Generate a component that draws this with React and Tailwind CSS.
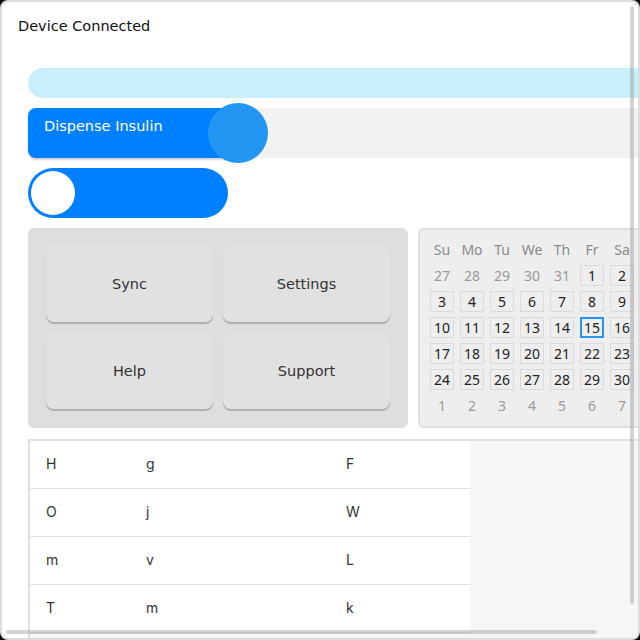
import React from "react";

const days = [];
[27, 28, 29, 30, 31].forEach((d) => days.push({ d, o: true }));
for (let i = 1; i <= 30; i++) days.push({ d: i, o: false });
for (let i = 1; i <= 7; i++) days.push({ d: i, o: true });

const rows = [
  ["H", "g", "F"],
  ["O", "j", "W"],
  ["m", "v", "L"],
  ["T", "m", "k"],
];

const mont = { fontFamily: '"DejaVu Sans", "Noto Sans", sans-serif' };
const cal = { fontFamily: '"Noto Sans", "Open Sans", sans-serif' };

export default function App() {
  return (
    <div className="w-[640px] h-[640px] bg-black">
      <div className="relative w-[640px] h-[640px] rounded-[8px] border-2 border-[#dddddd] bg-white overflow-hidden">
        <div className="w-[720px] flex flex-col">
          <div
            className="h-[66px] pl-[16px] pt-[15px] text-[14.5px] leading-[18px] text-[#111]"
            style={{ fontFamily: '"DejaVu Sans", sans-serif' }}
          >
            Device Connected
          </div>
          <div className="ml-[26px] w-[640px] h-[30px] rounded-full bg-[#c9effc]" />
          <div className="relative ml-[26px] mt-[10px] w-[640px] h-[50px] rounded-[8px] bg-[#f2f2f2]">
            <div className="w-[210px] h-[50px] rounded-l-[8px] bg-[#0080ff] shadow-[0_2px_2px_rgba(0,0,0,0.18)] pl-[16px] pt-[8px] text-[14.5px] leading-[20px] text-white" style={mont}>
              Dispense Insulin
            </div>
            <div className="absolute left-[180px] top-[-5px] w-[60px] h-[60px] rounded-full bg-[#2396f3]" />
          </div>
          <div className="ml-[26px] mt-[10px] w-[200px] h-[50px] rounded-full bg-[#0080ff] p-[3px]">
            <div className="w-[44px] h-[44px] rounded-full bg-white" />
          </div>
          <div className="ml-[26px] mt-[10px] flex gap-[10px]">
            <div className="w-[380px] h-[200px] rounded-[6px] bg-[#dedede] p-[18px] grid grid-cols-2 gap-[10px]" style={mont}>
              {["Sync", "Settings", "Help", "Support"].map((t) => (
                <div
                  key={t}
                  className="h-[76px] rounded-[8px] bg-[#e1e1e1] shadow-[0_2px_1px_rgba(0,0,0,0.22)] flex items-center justify-center text-[14.5px] leading-[18px] text-[#333]"
                >
                  {t}
                </div>
              ))}
            </div>
            <div className="w-[228px] h-[200px] rounded-[6px] border-2 border-[#e0e0e0] bg-[#eeeeee] pl-[10px] pt-[9px]" style={cal}>
              <div className="grid grid-cols-[repeat(7,24px)] auto-rows-[21px] gap-x-[6px] gap-y-[5px] text-[14px]">
                {["Su", "Mo", "Tu", "We", "Th", "Fr", "Sa"].map((h) => (
                  <div key={h} className="flex items-center justify-center text-[#8a8a8a]">
                    {h}
                  </div>
                ))}
                {days.map((x, i) =>
                  x.o ? (
                    <div key={i} className="flex items-center justify-center text-[#9a9a9a]">
                      {x.d}
                    </div>
                  ) : (
                    <div
                      key={i}
                      className={
                        x.d === 15
                          ? "flex items-center justify-center border-2 border-[#2196f3] text-[#222]"
                          : "flex items-center justify-center border border-[#dadada] text-[#222]"
                      }
                    >
                      {x.d}
                    </div>
                  )
                )}
              </div>
            </div>
          </div>
          <div className="ml-[26px] mt-[11px] w-[640px] h-[210px] border-t-2 border-l-2 border-[#e0e0e0] bg-[#f6f6f6]" style={{ fontFamily: 'Inter, "Noto Sans", sans-serif' }}>
            <div className="w-[440px] bg-white">
              {rows.map((r, i) => (
                <div key={i} className="flex h-[48px] border-b border-[#e0e0e0] items-center pb-[2px] text-[14px] text-[#333]">
                  <div className="w-[100px] pl-[16px]">{r[0]}</div>
                  <div className="w-[200px] pl-[16px]">{r[1]}</div>
                  <div className="w-[140px] pl-[16px]">{r[2]}</div>
                </div>
              ))}
            </div>
          </div>
        </div>
        <div className="absolute right-[4px] top-[4px] w-[4px] h-[598px] rounded-full bg-[rgba(150,150,150,0.42)]" />
        <div className="absolute left-[4px] bottom-[4px] h-[4px] w-[591px] rounded-full bg-[rgba(150,150,150,0.42)]" />
      </div>
    </div>
  );
}
